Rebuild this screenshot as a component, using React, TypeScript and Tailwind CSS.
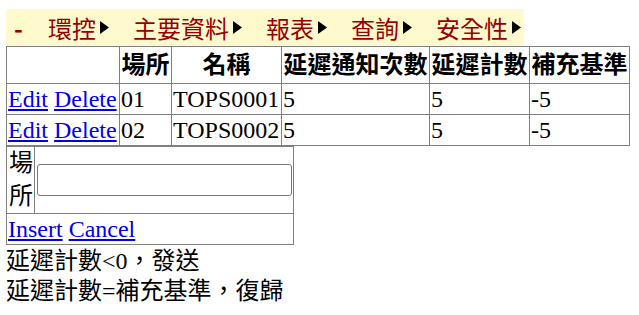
import React from "react";

const menu = ["環控", "主要資料", "報表", "查詢", "安全性"];

const rows = [
  { site: "01", name: "TOPS0001", notify: "5", delay: "5", base: "-5" },
  { site: "02", name: "TOPS0002", notify: "5", delay: "5", base: "-5" },
];

function Arrow() {
  return (
    <svg width="9" height="13" viewBox="0 0 9 13" className="ml-[4px] shrink-0">
      <polygon points="0,0 9,6.5 0,13" fill="#000" />
    </svg>
  );
}

export default function App() {
  return (
    <div className="pt-[9px] pl-[6px] text-[24px] text-black font-['Liberation_Serif','Noto_Sans_CJK_TC',serif]">
      {/* menu bar */}
      <div className="flex items-center w-[518px] h-[37px] bg-[#fffacd] text-[#990000] font-['Noto_Sans_CJK_TC',sans-serif] leading-[37px]">
        <span className="ml-[8px] w-[8px] font-bold">-</span>
        {menu.map((m, i) => (
          <div key={m} className={`flex items-center ${i === 0 ? "ml-[26px]" : "ml-[24px]"}`}>
            <span>{m}</span>
            <Arrow />
          </div>
        ))}
      </div>

      {/* list */}
      <table className="border-collapse table-fixed w-[623px] border border-[#808080]">
        <colgroup>
          <col className="w-[113px]" />
          <col className="w-[52px]" />
          <col className="w-[110px]" />
          <col className="w-[148px]" />
          <col className="w-[100px]" />
          <col className="w-[100px]" />
        </colgroup>
        <thead>
          <tr className="font-bold leading-[34px]">
            <th className="border border-[#808080] p-px"></th>
            <th className="border border-[#808080] p-px whitespace-nowrap">場所</th>
            <th className="border border-[#808080] p-px">名稱</th>
            <th className="border border-[#808080] p-px whitespace-nowrap">延遲通知次數</th>
            <th className="border border-[#808080] p-px whitespace-nowrap">延遲計數</th>
            <th className="border border-[#808080] p-px whitespace-nowrap">補充基準</th>
          </tr>
        </thead>
        <tbody>
          {rows.map((r) => (
            <tr key={r.site} className="leading-[28px]">
              <td className="border border-[#808080] p-px whitespace-nowrap">
                <a href="#" className="text-[#0000ee] underline">Edit</a>{" "}
                <a href="#" className="text-[#0000ee] underline">Delete</a>
              </td>
              <td className="border border-[#808080] p-px">{r.site}</td>
              <td className="border border-[#808080] p-px">{r.name}</td>
              <td className="border border-[#808080] p-px">{r.notify}</td>
              <td className="border border-[#808080] p-px">{r.delay}</td>
              <td className="border border-[#808080] p-px">{r.base}</td>
            </tr>
          ))}
        </tbody>
      </table>

      {/* insert form */}
      <table className="border-collapse table-fixed w-[287px] border border-[#808080]">
        <colgroup>
          <col className="w-[28px]" />
          <col className="w-[259px]" />
        </colgroup>
        <tbody>
          <tr>
            <td className="border border-[#808080] px-[2px] py-0 leading-[33px] break-all">場所</td>
            <td className="border border-[#808080] pl-[2px] pr-px py-0">
              <input
                type="text"
                className="block w-[255px] h-[32px] border border-[#767676] rounded-[3px] bg-white"
              />
            </td>
          </tr>
          <tr>
            <td colSpan={2} className="border border-[#808080] p-px leading-[28px]">
              <a href="#" className="text-[#0000ee] underline">Insert</a>{" "}
              <a href="#" className="text-[#0000ee] underline">Cancel</a>
            </td>
          </tr>
        </tbody>
      </table>

      <div className="leading-[30px] mt-[1px]">
        <div>延遲計數&lt;0，發送</div>
        <div>延遲計數=補充基準，復歸</div>
      </div>
    </div>
  );
}
